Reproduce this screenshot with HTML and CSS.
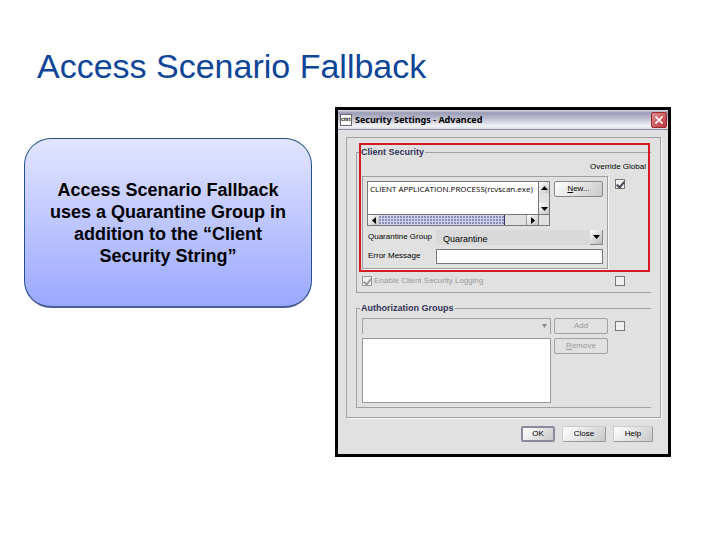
FILE: index.html
```html
<!DOCTYPE html>
<html lang="en">
<head>
    <meta charset="UTF-8">
    <title>Access Scenario Fallback</title>
    <link rel="stylesheet" href="styles.css">
</head>
<body>
    <h1>Access Scenario Fallback</h1>
    <main class="slide">
        <div class="callout">
            <p>Access Scenario Fallback uses a Quarantine Group in addition to the “Client Security String”</p>
        </div>

        <section class="dialog">
            <header class="title-bar">
                <span class="app-icon">citrix</span>
                <h2>Security Settings - Advanced</h2>
                <button class="close-btn" aria-label="Close window">
                    <svg width="16" height="16" viewBox="0 0 16 16"><path d="M4 4l8 8M12 4l-8 8" stroke="#fff" stroke-width="2"/></svg>
                </button>
            </header>

            <div class="panel">
                <!-- Client Security -->
                <fieldset class="client">
                    <legend>Client Security</legend>
                    <label class="override" for="override-client">Override Global</label>
                    <div class="row">
                        <div class="group">
                            <div class="process">
                                <div class="list">
                                    <textarea aria-label="Client security string" readonly wrap="off">CLIENT APPLICATION.PROCESS(rcvscan.exe)</textarea>
                                    <div class="v-scroll">
                                        <button aria-label="Scroll up"><svg width="7" height="4" viewBox="0 0 7 4"><path d="M0 4L3.500 0L7 4z"/></svg></button>
                                        <button aria-label="Scroll down"><svg width="7" height="4" viewBox="0 0 7 4"><path d="M0 0h7L3.500 4z"/></svg></button>
                                    </div>
                                    <div class="h-scroll">
                                        <button aria-label="Scroll left"><svg width="4" height="7" viewBox="0 0 4 7"><path d="M4 0v7L0 3.500z"/></svg></button>
                                        <span class="thumb"></span>
                                        <span class="track"></span>
                                        <button aria-label="Scroll right"><svg width="4" height="7" viewBox="0 0 4 7"><path d="M0 0v7L4 3.500z"/></svg></button>
                                    </div>
                                    <span class="corner"></span>
                                </div>
                                <button class="btn new-btn"><u>N</u>ew...</button>
                            </div>
                            <div class="field">
                                <label for="quarantine">Quarantine Group</label>
                                <div class="combo">
                                    <select id="quarantine"><option>Quarantine</option></select>
                                    <span class="arrow"><svg width="7" height="4" viewBox="0 0 7 4"><path d="M0 0h7L3.500 4z"/></svg></span>
                                </div>
                            </div>
                            <div class="field">
                                <label for="error">Error Message</label>
                                <input type="text" id="error">
                            </div>
                        </div>
                        <div class="side"><input type="checkbox" id="override-client" checked></div>
                    </div>
                    <div class="row logging">
                        <div class="log-option">
                            <input type="checkbox" id="logging" checked disabled>
                            <label for="logging">Enable Client Security Logging</label>
                        </div>
                        <div class="side"><input type="checkbox" aria-label="Override logging"></div>
                    </div>
                    <div class="highlight"></div>
                </fieldset>

                <!-- Authorization Groups -->
                <fieldset class="auth">
                    <legend>Authorization Groups</legend>
                    <div class="row">
                        <div class="auth-grid">
                            <div class="combo disabled">
                                <select aria-label="Authorization group" disabled></select>
                                <span class="arrow"><svg width="5" height="4" viewBox="0 0 5 4"><path d="M0 0h5L2.500 4z"/></svg></span>
                            </div>
                            <button class="btn flat" disabled>Add</button>
                            <select class="groups" aria-label="Groups" size="4"></select>
                            <button class="btn flat remove" disabled><u>R</u>emove</button>
                        </div>
                        <div class="side"><input type="checkbox" aria-label="Override groups"></div>
                    </div>
                </fieldset>
            </div>

            <footer class="actions">
                <button class="btn ok">OK</button>
                <button class="btn">Close</button>
                <button class="btn help">Help</button>
            </footer>
        </section>
    </main>
</body>
</html>
```
FILE: styles.css
```css
* {
    box-sizing: border-box;
}

body {
    font-family: "Liberation Sans", Arial, sans-serif;
    background-color: #ffffff;
    color: #000;
    margin: 0;
}

h1 {
    color: #0f4597;
    font-size: 34px;
    font-weight: normal;
    line-height: 36px;
    margin: 0;
    padding: 48px 36px 23px 37px;
}

.slide {
    display: grid;
    grid-template-columns: 6fr 7fr;
    column-gap: 23px;
    align-items: start;
    padding: 0 49px 40px 24px;
}

.callout {
    display: flex;
    align-items: center;
    justify-content: center;
    min-height: 170px;
    margin-top: 31px;
    padding: 0 24px;
    border: 1px solid #24508f;
    border-bottom: 2px solid #4a5f98;
    border-radius: 27px;
    background: linear-gradient(#e2e5ff, #9aa8ff);
}

.callout p {
    margin: 0;
    font-size: 18px;
    font-weight: bold;
    line-height: 22px;
    text-align: center;
}

/* Dialog */
.dialog {
    border: 3px solid #000;
    background-color: #e1e1e1;
    font-size: 8px;
    line-height: 10px;
}

.title-bar {
    display: flex;
    align-items: center;
    gap: 3px;
    height: 20px;
    padding: 0 1px 0 2px;
    border-bottom: 1px solid #8c8c98;
    background: linear-gradient(#d8d8e4 0%, #9b9bb5 15%, #b7b7cc 40%, #f4f4fa 85%, #d8d8e2 100%);
}

.title-bar h2 {
    flex: 1;
    margin: 0;
    font-family: "Noto Sans", sans-serif;
    font-size: 9px;
    line-height: 12px;
}

.app-icon {
    width: 12px;
    height: 12px;
    overflow: hidden;
    border: 1px solid #667;
    background-color: #fff;
    font-size: 5px;
    font-weight: bold;
    line-height: 8px;
}

.close-btn {
    width: 16px;
    height: 16px;
    padding: 0;
    border: 1px solid #9c2930;
    border-radius: 2px;
    background: linear-gradient(135deg, #dd8d8d, #b8383f);
}

.close-btn svg {
    display: block;
    width: 14px;
    height: 14px;
}

.panel {
    margin: 7px 7px 0 8px;
    padding: 9px 9px;
    border: 1px solid #a0a0a0;
    box-shadow: 1px 1px 0 #f8f8f8;
}

fieldset {
    position: relative;
    min-width: 0;
    margin: 0;
    padding: 0 0 6px 5px;
    border: 1px solid #a0a0a0;
    border-right: none;
}

legend {
    margin-left: -2px;
    padding: 0 1px;
    color: #333357;
    font-size: 9px;
    font-weight: bold;
    line-height: 10px;
}

.override {
    display: block;
    height: 19px;
    padding: 5px 5px 0 0;
    text-align: right;
}

.row {
    display: grid;
    grid-template-columns: 1fr 43px;
}

.side {
    padding: 3px 0 0 7px;
}

.group {
    display: grid;
    gap: 4px;
    padding: 4px;
    border: 1px solid #a0a0a0;
    box-shadow: 1px 1px 0 #f8f8f8;
}

.process {
    display: flex;
    align-items: flex-start;
    gap: 4px;
}

.list {
    flex: 1;
    display: grid;
    grid-template-columns: 1fr 11px;
    grid-template-rows: 32px 11px;
    border: 1px solid #777;
}

.list textarea {
    min-width: 0;
    width: 100%;
    height: 100%;
    padding: 2px;
    border: none;
    outline: none;
    resize: none;
    overflow: hidden;
    background-color: #fff;
    font-family: "Open Sans", sans-serif;
    font-size: 8px;
    line-height: 10px;
}

.v-scroll {
    display: flex;
    flex-direction: column;
    justify-content: space-between;
    border-left: 1px solid #777;
}

.h-scroll {
    display: flex;
    border-top: 1px solid #777;
}

.list button {
    display: flex;
    align-items: center;
    justify-content: center;
    width: 11px;
    height: 11px;
    padding: 0;
    border: none;
    background: linear-gradient(135deg, #fff, #c4c4c4);
}

.v-scroll button {
    width: 100%;
}

.h-scroll button {
    height: 100%;
}

.thumb {
    flex: 6;
    border-right: 1px solid #333366;
    background: radial-gradient(circle at 1px 1px, #8e8ebc 1px, transparent 1px) 0 1px / 3px 3px #d2d2e8;
}

.track {
    flex: 1;
    border-right: 1px solid #999;
}

.corner {
    border-top: 1px solid #777;
    border-left: 1px solid #777;
}

.field {
    display: grid;
    grid-template-columns: 69px 1fr;
    height: 15px;
}

.field label {
    padding: 2px 0 0 1px;
    white-space: nowrap;
}

.field input {
    min-width: 0;
    width: 100%;
    padding: 0 6px;
    border: 1px solid #777;
    background-color: #fff;
    font-size: 9px;
}

.combo {
    position: relative;
}

.combo select {
    display: block;
    width: 100%;
    height: 100%;
    padding: 2px 16px 0 7px;
    border: none;
    border-radius: 0;
    appearance: none;
    background-color: #d9d9d9;
    color: #000;
    font-family: inherit;
    font-size: 9px;
}

.arrow {
    position: absolute;
    top: 0;
    right: 0;
    display: flex;
    align-items: center;
    justify-content: center;
    width: 13px;
    height: 100%;
    border-right: 1px solid #888;
    border-bottom: 1px solid #888;
    background: linear-gradient(135deg, #fff, #b8b8b8);
    pointer-events: none;
}

.combo.disabled select {
    border: 1px solid #a0a0a0;
    border-bottom: none;
    background-color: #e1e1e1;
    opacity: 1;
}

.disabled .arrow {
    border: none;
    background: none;
    fill: #888;
}

input[type="checkbox"] {
    display: block;
    position: relative;
    width: 10px;
    height: 10px;
    margin: 0;
    border: 1px solid #777;
    appearance: none;
    background-color: #f0f0f0;
}

input[type="checkbox"]:checked::after {
    content: "";
    position: absolute;
    top: 0;
    left: 2px;
    width: 3px;
    height: 6px;
    border: solid #445;
    border-width: 0 2px 2px 0;
    transform: rotate(40deg);
}

input[type="checkbox"]:disabled {
    border-color: #999;
}

input[type="checkbox"]:disabled::after {
    border-color: #999;
}

.logging {
    margin-top: 7px;
}

.logging .side {
    padding-top: 0;
}

.log-option {
    display: flex;
    gap: 2px;
    color: #999;
}

/* Red frame over the client security settings */
.highlight {
    position: absolute;
    top: -14px;
    left: 2px;
    right: 1px;
    bottom: 20px;
    border: 2px solid #d31c22;
    pointer-events: none;
}

.auth {
    margin-top: 10px;
    padding: 5px 0 4px 5px;
}

.auth-grid {
    display: grid;
    grid-template-columns: 1fr 54px;
    grid-template-rows: 16px 65px;
    gap: 4px 3px;
}

.groups {
    width: 100%;
    height: 100%;
    padding: 0;
    border: 1px solid #999;
    border-radius: 0;
    background-color: #fff;
}

.btn {
    height: 16px;
    padding: 0;
    border: 1px solid #999;
    border-top-color: #ccc;
    border-left-color: #ccc;
    border-radius: 2px;
    background: linear-gradient(135deg, #fff, #c8c8c8);
    color: #000;
    font-family: inherit;
    font-size: 8px;
    line-height: 10px;
}

.new-btn {
    width: 49px;
    border-color: #888;
}

.flat {
    border-color: #a0a0a0;
    background: none;
    color: #999;
}

.actions {
    display: flex;
    justify-content: flex-end;
    gap: 7px;
    padding: 8px 15px 12px;
}

.actions .btn {
    width: 44px;
}

.actions .ok {
    width: 34px;
    border: 2px solid #8a8a9a;
}

.actions .help {
    width: 40px;
}
```
